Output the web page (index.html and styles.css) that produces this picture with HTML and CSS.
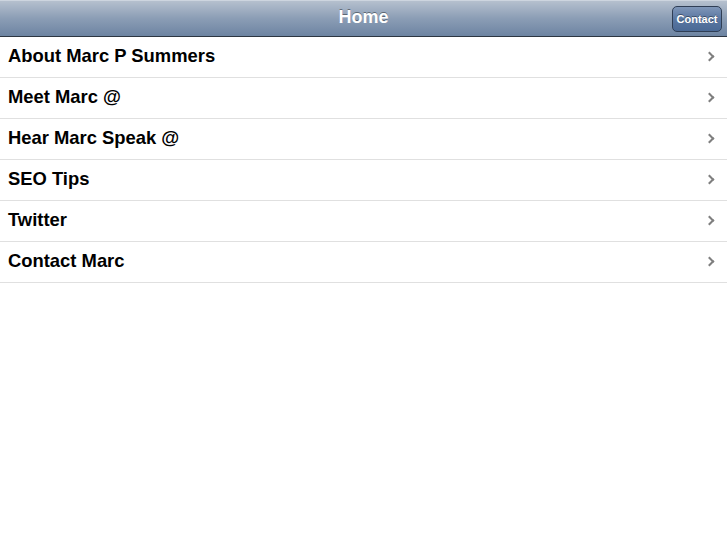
FILE: index.html
```html
<!DOCTYPE html>
<html lang="en">
<head>
    <meta charset="UTF-8">
    <meta name="viewport" content="width=device-width, initial-scale=1.0">
    <title>Home</title>
    <link rel="stylesheet" href="styles.css">
</head>
<body>
    <!-- Felső sáv -->
    <div class="toolbar">
        <h1>Home</h1>
        <a class="button" href="#">Contact</a>
    </div>

    <!-- Menü lista -->
    <ul class="menu">
        <li><a href="#">About Marc P Summers<span class="arrow"></span></a></li>
        <li><a href="#">Meet Marc @<span class="arrow"></span></a></li>
        <li><a href="#">Hear Marc Speak @<span class="arrow"></span></a></li>
        <li><a href="#">SEO Tips<span class="arrow"></span></a></li>
        <li><a href="#">Twitter<span class="arrow"></span></a></li>
        <li><a href="#">Contact Marc<span class="arrow"></span></a></li>
    </ul>
</body>
</html>
```

FILE: styles.css
```css
* {
    box-sizing: border-box;
}
body {
    font-family: "Liberation Sans", Arial, sans-serif;
    margin: 0;
    background: #fff;
}

.toolbar {
    height: 37px;
    display: flex;
    align-items: center;
    justify-content: center;
    position: relative;
    background: linear-gradient(#b5c0ce, #8b9db5 50%, #6d84a2);
    border-top: 1px solid #cdd5df;
    border-bottom: 1px solid #2d3642;
    padding-bottom: 2px;
}
.toolbar h1 {
    margin: 0;
    font-size: 18px;
    color: #fff;
    text-shadow: 0 -1px 0 rgba(0, 0, 0, 0.4);
}
.button {
    position: absolute;
    right: 5px;
    top: 5px;
    height: 26px;
    width: 50px;
    justify-content: center;
    display: flex;
    align-items: center;
    font-size: 11px;
    font-weight: bold;
    color: #fff;
    text-decoration: none;
    border: 1px solid #2f3e55;
    border-radius: 5px;
    background: linear-gradient(#7f96b8, #5a77a2 50%, #4a6995);
    text-shadow: 0 -1px 0 rgba(0, 0, 0, 0.4);
}

.menu {
    list-style: none;
    margin: 0;
    padding: 0;
}
.menu li {
    border-bottom: 1px solid #e0e0e0;
}
.menu a {
    height: 40px;
    display: flex;
    align-items: center;
    justify-content: space-between;
    padding: 0 14px 2px 8px;
    font-size: 18.4px;
    font-weight: bold;
    color: #000;
    text-decoration: none;
}
.arrow {
    width: 7px;
    height: 7px;
    border-top: 2px solid #7f7f7f;
    border-right: 2px solid #7f7f7f;
    transform: rotate(45deg);
}
```
